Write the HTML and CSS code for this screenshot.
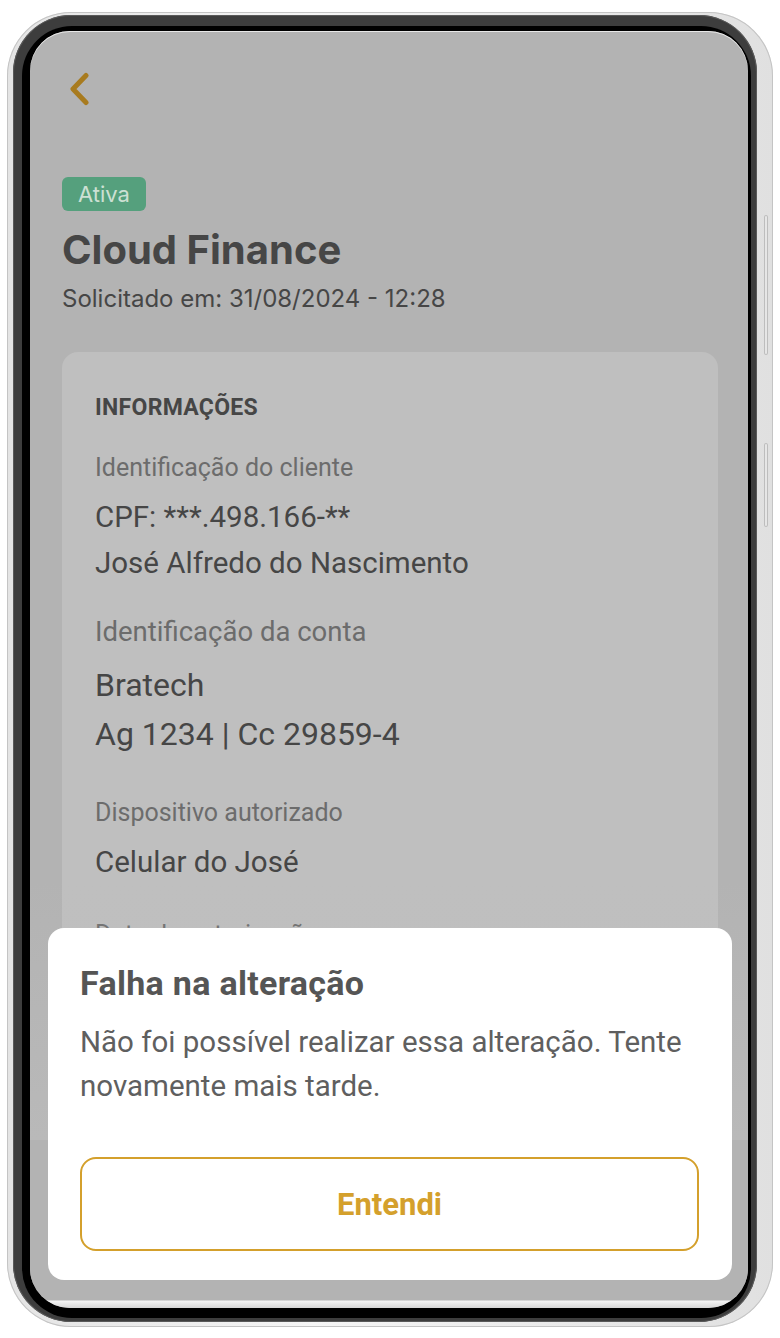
FILE: index.html
```html
<!DOCTYPE html>
<html lang="pt-BR">
<head>
    <meta charset="UTF-8">
    <meta name="viewport" content="width=device-width, initial-scale=1.0">
    <title>Cloud Finance</title>
    <link rel="stylesheet" href="styles.css">
</head>
<body>
    <div class="phone">
        <span class="side-btn side-btn-top"></span>
        <span class="side-btn side-btn-bottom"></span>
        <div class="bezel">
            <div class="glass">
                <div class="screen">
                    <div class="page">
                        <button class="back" aria-label="Voltar">
                            <svg width="22" height="34" viewBox="0 0 22 34">
                                <path d="M18 3.5 L5 17 L18 30.5" fill="none" stroke="currentColor" stroke-width="5" stroke-linecap="round" stroke-linejoin="round"/>
                            </svg>
                        </button>

                        <span class="badge">Ativa</span>
                        <h1 class="title">Cloud Finance</h1>
                        <p class="requested">Solicitado em: 31/08/2024 - 12:28</p>

                        <div class="card">
                            <h2 class="card-title">INFORMAÇÕES</h2>

                            <div class="info info-first">
                                <p class="info-label">Identificação do cliente</p>
                                <p class="info-value">CPF: ***.498.166-**</p>
                                <p class="info-value">José Alfredo do Nascimento</p>
                            </div>

                            <div class="info info-account">
                                <p class="info-label info-label-lg">Identificação da conta</p>
                                <p class="info-value info-value-lg">Bratech</p>
                                <p class="info-value info-value-lg">Ag 1234 | Cc 29859-4</p>
                            </div>

                            <div class="info info-device">
                                <p class="info-label">Dispositivo autorizado</p>
                                <p class="info-value">Celular do José</p>
                            </div>

                            <div class="info info-date">
                                <p class="info-label">Data da autorização</p>
                                <p class="info-value">31/08/2024 - 12:28</p>
                            </div>
                        </div>
                    </div>

                    <div class="fade"></div>
                    <div class="bottom-bar"></div>

                    <div class="sheet">
                        <h3 class="sheet-title">Falha na alteração</h3>
                        <p class="sheet-text">Não foi possível realizar essa alteração. Tente novamente mais tarde.</p>
                        <button class="sheet-btn">Entendi</button>
                    </div>
                </div>
            </div>
        </div>
    </div>
</body>
</html>
```

FILE: styles.css
```css
body {
    margin: 0;
    background-color: #fff;
    font-family: Inter, "Noto Sans", sans-serif;
}
.phone {
    position: relative;
    box-sizing: border-box;
    width: 766px;
    height: 1315px;
    margin: 12px 0 0 7px;
    padding: 3px 16px 5px 6px;
    border-radius: 64px;
    background: linear-gradient(90deg, #e4e4e4, #f6f6f6 40%, #e0e0e0);
    box-shadow: inset 0 0 0 1px #c4c4c4;
}
.side-btn {
    position: absolute;
    right: 5px;
    width: 4px;
    border-radius: 2px;
    background: #e6e6e6;
    box-shadow: inset 0 0 0 1px #bdbdbd;
}
.side-btn-top {
    top: 203px;
    height: 140px;
}
.side-btn-bottom {
    top: 431px;
    height: 84px;
}
.bezel {
    box-sizing: border-box;
    height: 100%;
    padding: 11px 6px 4px 9px;
    border-radius: 58px;
    background: #3d3d3d;
    box-shadow: inset 0 0 0 1px #5a5a5a;
}
.glass {
    box-sizing: border-box;
    height: 100%;
    padding: 5px 3px 10px 8px;
    border-radius: 50px;
    background: #000;
}
.screen {
    position: relative;
    height: 100%;
    overflow: hidden;
    border-radius: 40px;
    background: #b3b3b3;
    box-shadow: inset 0 1px 0 #e8e8e8;
}
.page {
    padding: 41px 30px 0 32px;
}
.back {
    display: block;
    padding: 0;
    margin: 0 0 0 6px;
    border: 0;
    background: none;
    color: #a87b1f;
    height: 34px;
}
.badge {
    display: inline-block;
    margin-top: 71px;
    padding: 0 16px;
    height: 34px;
    line-height: 34px;
    border-radius: 6px;
    background: #55a07d;
    color: #cde0d4;
    font-size: 22px;
}
.title {
    margin: 15px 0 0;
    font-size: 40px;
    line-height: 48px;
    font-weight: 700;
    color: #464646;
}
.requested {
    margin: 11px 0 0;
    font-size: 24px;
    line-height: 28px;
    color: #464646;
}
.card {
    margin-top: 39px;
    padding: 42px 33px 60px;
    border-radius: 16px;
    background: #bfbfbf;
    font-family: Roboto, "Noto Sans", sans-serif;
}
.card-title {
    margin: 0;
    font-size: 23px;
    line-height: 28px;
    font-weight: 700;
    letter-spacing: 0.3px;
    color: #464646;
}
.info {
    margin-top: 35px;
}
.info-first {
    margin-top: 31px;
}
.info-account {
    margin-top: 30px;
}
.info-device {
    margin-top: 39px;
}
.info-date {
    margin-top: 35px;
}
.info-label {
    margin: 0 0 11px;
    font-size: 25px;
    line-height: 30px;
    color: #6c6c6c;
}
.info-label-lg {
    margin-bottom: 13px;
    font-size: 27.5px;
    line-height: 32px;
}
.info-value {
    margin: 0;
    font-size: 29.5px;
    line-height: 46px;
    color: #464646;
}
.info-value-lg {
    font-size: 32px;
    line-height: 49px;
}
.fade {
    position: absolute;
    left: 0;
    right: 0;
    top: 850px;
    height: 259px;
    background: linear-gradient(rgba(189, 189, 189, 0), rgba(189, 189, 189, 0.6));
}
.bottom-bar {
    position: absolute;
    left: 0;
    right: 0;
    top: 1109px;
    bottom: 0;
    background: linear-gradient(#b3b3b3 0, #b3b3b3 160px, #f4f4f4 161px, #d6d6d6);
}
.sheet {
    position: absolute;
    left: 18px;
    right: 16px;
    top: 897px;
    box-sizing: border-box;
    height: 352px;
    padding: 35px 33px 0 32px;
    border-radius: 16px;
    background: #fff;
    font-family: Roboto, "Noto Sans", sans-serif;
}
.sheet-title {
    margin: 0;
    font-size: 34px;
    line-height: 40px;
    font-weight: 700;
    letter-spacing: 0.3px;
    color: #555;
}
.sheet-text {
    margin: 17px 0 0;
    font-size: 29.5px;
    line-height: 44px;
    color: #5f5f5f;
}
.sheet-btn {
    display: block;
    width: 100%;
    height: 94px;
    margin-top: 49px;
    border: 2px solid #d4a02c;
    border-radius: 16px;
    background: #fff;
    color: #d4a02c;
    font-family: Roboto, "Noto Sans", sans-serif;
    font-size: 31px;
    font-weight: 700;
}
```
